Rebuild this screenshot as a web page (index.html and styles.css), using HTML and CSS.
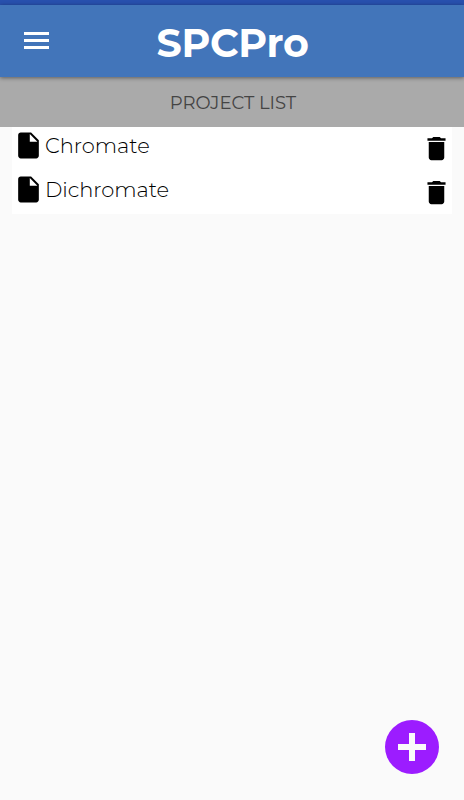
FILE: index.html
```html
<!DOCTYPE html>
<html lang="en">
<head>
    <meta charset="UTF-8">
    <meta name="viewport" content="width=device-width, initial-scale=1.0">
    <title>SPCPro</title>
    <link rel="stylesheet" href="styles.css">
</head>
<body>

<div class="status-bar"></div>

<header class="toolbar">
    <button class="menu-button" aria-label="Menu">
        <svg viewBox="0 0 25 17"><path d="M0 0h25v3H0zM0 7h25v3H0zM0 14h25v3H0z"/></svg>
    </button>
    <h1>SPCPro</h1>
</header>

<h2 class="list-title">PROJECT LIST</h2>

<ul class="project-list">
    <li>
        <svg class="file-icon" viewBox="0 0 24 24"><path d="M6 2c-1.100 0-2 .9-2 2v16c0 1.100.9 2 2 2h12c1.100 0 2-.9 2-2V8l-6-6H6zm7 7V3.100L18.900 9H13z"/></svg>
        <span class="project-name">Chromate</span>
        <button class="delete-button" aria-label="Delete">
            <svg viewBox="0 0 24 24"><path d="M6 19c0 1.100.9 2 2 2h8c1.100 0 2-.9 2-2V7H6v12zM19 4h-3.500l-1-1h-5l-1 1H5v2h14V4z"/></svg>
        </button>
    </li>
    <li>
        <svg class="file-icon" viewBox="0 0 24 24"><path d="M6 2c-1.100 0-2 .9-2 2v16c0 1.100.9 2 2 2h12c1.100 0 2-.9 2-2V8l-6-6H6zm7 7V3.100L18.900 9H13z"/></svg>
        <span class="project-name">Dichromate</span>
        <button class="delete-button" aria-label="Delete">
            <svg viewBox="0 0 24 24"><path d="M6 19c0 1.100.9 2 2 2h8c1.100 0 2-.9 2-2V7H6v12zM19 4h-3.500l-1-1h-5l-1 1H5v2h14V4z"/></svg>
        </button>
    </li>
</ul>

<button class="add-button" aria-label="Add project">
    <svg viewBox="0 0 28 28"><path d="M11 0h6v11h11v6H17v11h-6V17H0v-6h11z"/></svg>
</button>

</body>
</html>
```
FILE: styles.css
```css
* {
    box-sizing: border-box;
}

body {
    font-family: Montserrat, Inter, sans-serif;
    background: #fafafa;
    color: #000;
    margin: 0;
    height: 800px;
    overflow: hidden;
}

button {
    display: flex;
    padding: 0;
    border: none;
    background: none;
    cursor: pointer;
}

.status-bar {
    height: 5px;
    background: #2850ad;
}

.toolbar {
    position: relative;
    display: flex;
    align-items: center;
    height: 72px;
    padding-left: 24px;
    background: #4275ba;
    box-shadow: 0 1px 4px rgba(0, 0, 0, 0.45);
}

.menu-button {
    margin-bottom: 1px;
}

.menu-button svg {
    width: 25px;
    height: 17px;
    fill: #fff;
}

.toolbar h1 {
    margin: 3px 0 0 107.5px;
    font-size: 39.5px;
    font-weight: 700;
    line-height: 48px;
    letter-spacing: -0.3px;
    color: #fff;
}

.list-title {
    height: 50px;
    margin: 0;
    padding-left: 2px;
    background: #aaa;
    color: #444;
    font-size: 18px;
    font-weight: 400;
    line-height: 53px;
    text-align: center;
}

.project-list {
    list-style-type: none;
    margin: 0 12px;
    padding: 0;
    background: #fff;
}

.project-list li {
    display: flex;
    align-items: flex-start;
    height: 44px;
    padding: 3px 0 0 1px;
}

.project-list li:last-child {
    height: 43px;
}

.file-icon {
    width: 31px;
    height: 31px;
}

.project-name {
    flex: 1;
    padding-left: 1px;
    font-size: 21px;
    font-weight: 300;
    line-height: 32px;
    letter-spacing: -0.05px;
}

.delete-button {
    margin: 3px 0 0;
}

.delete-button svg {
    width: 31px;
    height: 31px;
}

.add-button {
    position: fixed;
    right: 25px;
    bottom: 26px;
    align-items: center;
    justify-content: center;
    width: 54px;
    height: 54px;
    border-radius: 50%;
    background: #9c1cff;
}

.add-button svg {
    width: 28px;
    height: 28px;
    fill: #fafafa;
}
```
